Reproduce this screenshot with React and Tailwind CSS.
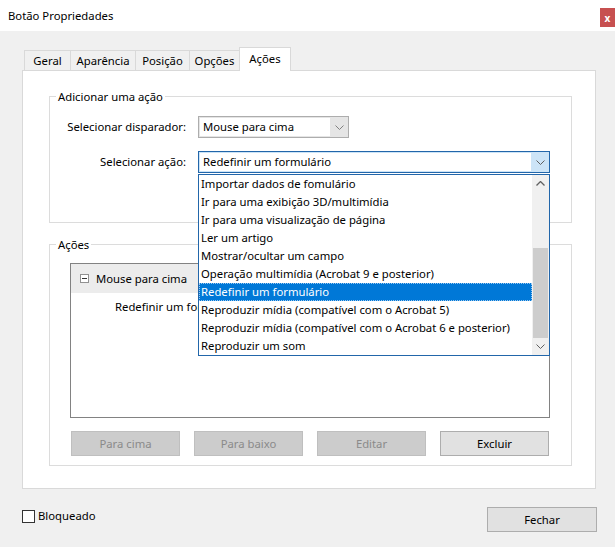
function ChevronDown({ color = "#606060" }) {
  return (
    <svg width="9" height="5" viewBox="0 0 9 5">
      <path d="M0.5 0.5 L4.5 4.5 L8.5 0.5" fill="none" stroke={color} strokeWidth="1" />
    </svg>
  );
}
function ChevronUp({ color = "#606060" }) {
  return (
    <svg width="9" height="5" viewBox="0 0 9 5">
      <path d="M0.5 4.5 L4.5 0.5 L8.5 4.5" fill="none" stroke={color} strokeWidth="1.3" />
    </svg>
  );
}

const items = [
  "Importar dados de fomulário",
  "Ir para uma exibição 3D/multimídia",
  "Ir para uma visualização de página",
  "Ler um artigo",
  "Mostrar/ocultar um campo",
  "Operação multimídia (Acrobat 9 e posterior)",
  "Redefinir um formulário",
  "Reproduzir mídia (compatível com o Acrobat 5)",
  "Reproduzir mídia (compatível com o Acrobat 6 e posterior)",
  "Reproduzir um som",
];

function Tab({ label, w }) {
  return (
    <div
      className="h-[20px] bg-[#f0f0f0] border-t border-r border-[#d9d9d9] flex items-center justify-center"
      style={{ width: w }}
    >
      {label}
    </div>
  );
}

function Btn({ label, disabled }) {
  return (
    <div
      className={
        "w-[109px] h-[25px] flex items-center justify-center border " +
        (disabled
          ? "bg-[#cccccc] border-[#bfbfbf] text-[#8a8a8a]"
          : "bg-[#e1e1e1] border-[#adadad] text-black")
      }
    >
      {label}
    </div>
  );
}

export default function App() {
  return (
    <div className="w-[615px] h-[547px] bg-[#f0f0f0] relative overflow-hidden font-['Noto_Sans','Open_Sans',sans-serif] text-[11.3px] leading-[16px] text-black">
      {/* title bar */}
      <div className="h-[31px] bg-white flex items-start justify-between">
        <span className="pl-[8px] pt-[8px]">Botão Propriedades</span>
        <div className="mt-[8px] w-[15px] h-[19px] bg-[#c75050] flex items-center justify-center text-white text-[10px] font-bold leading-none">
          x
        </div>
      </div>

      <div className="pl-[22px] pt-[16px]">
        {/* tabs */}
        <div className="flex items-end h-[23px] pl-[2px] relative z-10">
          <div className="h-[20px] w-[47px] bg-[#f0f0f0] border-t border-l border-r border-[#d9d9d9] flex items-center justify-center">
            Geral
          </div>
          <Tab label="Aparência" w={65} />
          <Tab label="Posição" w={54} />
          <Tab label="Opções" w={50} />
          <div className="h-[24px] w-[52px] -mb-px -ml-px bg-white border-t border-l border-r border-[#d9d9d9] flex justify-center pt-[3px]">
            Ações
          </div>
        </div>

        {/* panel */}
        <div className="w-[574px] h-[419px] bg-white border border-[#d9d9d9] pl-[26px] pt-[16px]">
          <fieldset className="w-[523px] border border-[#dcdcdc] pb-[49px]">
            <legend className="ml-[6px] px-[2px] pt-[2px]">Adicionar uma ação</legend>
            <div className="flex items-center h-[22px] mt-[11px]">
              <span className="w-[136px] text-right">Selecionar disparador:</span>
              <div className="ml-[12px] w-[151px] h-[22px] border border-[#adadad] bg-[#e5e5e5] flex items-stretch">
                <div className="flex-1 bg-white m-px flex items-center pl-[3px]">Mouse para cima</div>
                <div className="w-[17px] flex items-center justify-center">
                  <ChevronDown color="#808080" />
                </div>
              </div>
            </div>
            <div className="flex items-center h-[22px] mt-[13px]">
              <span className="w-[136px] text-right">Selecionar ação:</span>
              <div className="ml-[12px] w-[352px] h-[22px] border border-[#2266aa] bg-[#cce4f7] flex items-stretch">
                <div className="flex-1 bg-white my-px ml-px flex items-center pl-[3px]">Redefinir um formulário</div>
                <div className="w-[18px] flex items-center justify-center">
                  <ChevronDown color="#606060" />
                </div>
              </div>
            </div>
          </fieldset>

          <fieldset className="w-[523px] border border-[#dcdcdc] mt-[12px] pb-[9px]">
            <legend className="ml-[6px] px-[2px] pt-[2px]">Ações</legend>
            <div className="pl-[20px]">
              <div className="mt-[10px] w-[480px] h-[155px] border border-[#828282] bg-white">
                <div className="h-[29px] bg-[#ececec] flex items-center pl-[9px]">
                  <div className="w-[9px] h-[9px] border border-[#919191] bg-white flex items-center justify-center">
                    <div className="w-[5px] h-px bg-[#333]" />
                  </div>
                  <span className="ml-[7px]">Mouse para cima</span>
                </div>
                <div className="ml-[44px] mt-[6px] w-[83px] overflow-hidden whitespace-nowrap">Redefinir um formulário</div>
              </div>
              <div className="flex gap-[14px] mt-[13px] ml-px">
                <Btn label="Para cima" disabled />
                <Btn label="Para baixo" disabled />
                <Btn label="Editar" disabled />
                <Btn label="Excluir" />
              </div>
            </div>
          </fieldset>
        </div>

        {/* bottom */}
        <div className="flex justify-between items-start pr-[18px]">
          <div className="flex items-center mt-[19px]">
            <div className="w-[13px] h-[13px] border border-[#333] bg-white" />
            <span className="ml-[3px]">Bloqueado</span>
          </div>
          <div className="mt-[18px] w-[110px] h-[25px] bg-[#e1e1e1] border border-[#adadad] flex items-center justify-center">
            Fechar
          </div>
        </div>
      </div>

      {/* dropdown list overlay */}
      <div className="absolute left-[198px] top-[174px] w-[352px] h-[182px] border border-[#2266aa] bg-white flex z-20">
        <div className="flex-1 flex flex-col">
          {items.map((t, i) => (
            <div
              key={t}
              className={
                "h-[18px] flex items-center whitespace-nowrap " +
                (i === 6
                  ? "bg-[#0078d7] text-white border border-dotted border-[#9cc8ef] pl-[1px]"
                  : "pl-[2px]")
              }
            >
              {t}
            </div>
          ))}
        </div>
        <div className="w-[17px] bg-[#f0f0f0] flex flex-col">
          <div className="h-[17px] flex items-center justify-center">
            <ChevronUp />
          </div>
          <div className="h-[56px]" />
          <div className="h-[90px] mx-px bg-[#cdcdcd]" />
          <div className="flex-1 flex items-center justify-center">
            <ChevronDown />
          </div>
        </div>
      </div>
    </div>
  );
}
